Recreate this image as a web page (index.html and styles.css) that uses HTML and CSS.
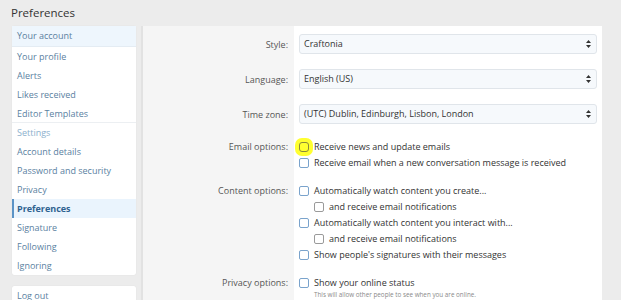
FILE: index.html
```html
<!DOCTYPE html>
<html lang="en">
<head>
    <meta charset="UTF-8">
    <title>Preferences</title>
    <link rel="stylesheet" href="styles.css">
</head>
<body>
    <h1 class="page-title">Preferences</h1>

    <div class="page">
        <div class="side">
            <div class="side-block">
                <a class="side-head">Your account</a>
                <a class="side-link">Your profile</a>
                <a class="side-link">Alerts</a>
                <a class="side-link">Likes received</a>
                <a class="side-link last">Editor Templates</a>
                <div class="side-cat">Settings</div>
                <a class="side-link">Account details</a>
                <a class="side-link">Password and security</a>
                <a class="side-link">Privacy</a>
                <a class="side-link active">Preferences</a>
                <a class="side-link">Signature</a>
                <a class="side-link">Following</a>
                <a class="side-link">Ignoring</a>
            </div>
            <div class="side-block logout">
                <a class="side-link">Log out</a>
            </div>
        </div>

        <div class="main">
            <div class="row select-row">
                <div class="label">Style:</div>
                <div class="field">
                    <div class="select">Craftonia
                        <svg class="arrows" viewBox="0 0 5 8"><path d="M2.5 0 L5 3 L0 3 Z M0 5 L5 5 L2.5 8 Z"/></svg>
                    </div>
                </div>
            </div>
            <div class="row select-row">
                <div class="label">Language:</div>
                <div class="field">
                    <div class="select">English (US)
                        <svg class="arrows" viewBox="0 0 5 8"><path d="M2.5 0 L5 3 L0 3 Z M0 5 L5 5 L2.5 8 Z"/></svg>
                    </div>
                </div>
            </div>
            <div class="row select-row">
                <div class="label">Time zone:</div>
                <div class="field">
                    <div class="select">(UTC) Dublin, Edinburgh, Lisbon, London
                        <svg class="arrows" viewBox="0 0 5 8"><path d="M2.5 0 L5 3 L0 3 Z M0 5 L5 5 L2.5 8 Z"/></svg>
                    </div>
                </div>
            </div>

            <div class="row check-group">
                <div class="label">Email options:</div>
                <div class="field">
                    <div class="check"><span class="box marked"></span>Receive news and update emails</div>
                    <div class="check"><span class="box"></span>Receive email when a new conversation message is received</div>
                </div>
            </div>

            <div class="row check-group">
                <div class="label">Content options:</div>
                <div class="field">
                    <div class="check"><span class="box"></span>Automatically watch content you create...</div>
                    <div class="check sub"><span class="box grey"></span>and receive email notifications</div>
                    <div class="check"><span class="box"></span>Automatically watch content you interact with...</div>
                    <div class="check sub"><span class="box grey"></span>and receive email notifications</div>
                    <div class="check"><span class="box"></span>Show people's signatures with their messages</div>
                </div>
            </div>

            <div class="row check-group">
                <div class="label">Privacy options:</div>
                <div class="field">
                    <div class="check"><span class="box"></span>Show your online status</div>
                    <div class="hint">This will allow other people to see when you are online.</div>
                </div>
            </div>
        </div>
    </div>
</body>
</html>
```

FILE: styles.css
```css
* {
    margin: 0;
    padding: 0;
    box-sizing: border-box;
}

body {
    font-family: 'Open Sans', 'Noto Sans', sans-serif;
    font-size: 9px;
    background: #ececec;
    color: #333;
    padding: 0 19px 0 12px;
    height: 300px;
    overflow: hidden;
}

.page-title {
    font-size: 11.5px;
    font-weight: 400;
    color: #333;
    height: 26px;
    line-height: 26px;
    margin-left: -1px;
}

.page {
    display: flex;
    gap: 5px;
    align-items: flex-start;
}

/* sidebar */

.side {
    width: 124px;
    flex: none;
    display: flex;
    flex-direction: column;
    gap: 11px;
}

.side-block {
    background: #fff;
    border-radius: 2px;
    box-shadow: 0 0 1px rgba(0, 0, 0, 0.12);
}

.side-head,
.side-link,
.side-cat {
    display: block;
    height: 19px;
    line-height: 19px;
    padding-left: 5px;
    color: #5a7f9f;
    white-space: nowrap;
}

.side-head {
    height: 21px;
    line-height: 20px;
    background: #eef6fd;
    border-bottom: 1px solid #e4ecf3;
}

.side-link.last {
    border-bottom: 1px solid #eceff2;
}

.side-cat {
    color: #8cb0cd;
}

.side-link.active {
    background: #eaf4fd;
    color: #2f6290;
    font-weight: 700;
    border-left: 2px solid #5b93c6;
    padding-left: 3px;
}

.logout {
    height: 20px;
}

/* main panel */

.main {
    flex: 1;
    min-width: 0;
    height: 290px;
    border-left: 2px solid #e2e2e2;
    background: linear-gradient(to right, #f5f5f5 0, #f5f5f5 151px, #fff 151px);
    padding-top: 8px;
}

.row {
    display: grid;
    grid-template-columns: 151px 1fr;
}

.label {
    text-align: right;
    padding-right: 6px;
    color: #555;
}

.field {
    padding: 0 5px;
}

.select-row {
    height: 20px;
    margin-bottom: 15px;
    align-items: center;
}

.select {
    height: 20px;
    line-height: 18px;
    border: 1px solid #e0e5ea;
    border-radius: 3px;
    background: #f6f9fc;
    padding-left: 4px;
    position: relative;
    color: #333;
}

.arrows {
    position: absolute;
    right: 5px;
    top: 5px;
    width: 5px;
    height: 8px;
    fill: #333;
}

.check-group {
    margin-bottom: 12px;
}

.check-group .label {
    line-height: 16px;
}

.check {
    height: 16px;
    line-height: 16px;
    display: flex;
    align-items: center;
    gap: 5px;
    color: #333;
    white-space: nowrap;
}

.check.sub {
    padding-left: 15px;
}

.box {
    width: 10px;
    height: 10px;
    flex: none;
    border: 1px solid #7aa3cc;
    border-radius: 2px;
    background: #fff;
}

.box.grey {
    border-color: #9a9a9a;
}

.box.marked {
    border-color: #8a8a3a;
    background: #ffff30;
    box-shadow: 0 0 0 4px #ffff30;
    border-radius: 3px;
}

.hint {
    font-size: 6.3px;
    color: #8a8a8a;
    padding-left: 15px;
    line-height: 8px;
}
```
